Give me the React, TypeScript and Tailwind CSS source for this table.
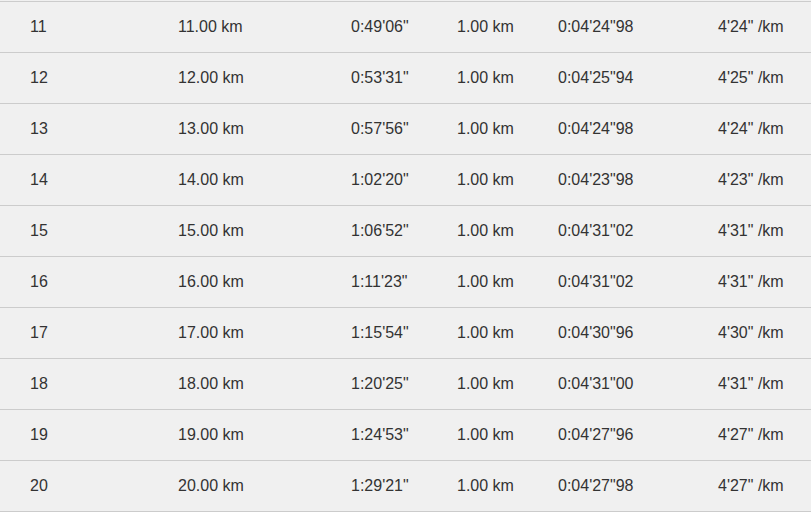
import React from "react";

const rows: [string, string, string, string, string, string][] = [
  ["11", "11.00 km", "0:49'06\"", "1.00 km", "0:04'24\"98", "4'24\" /km"],
  ["12", "12.00 km", "0:53'31\"", "1.00 km", "0:04'25\"94", "4'25\" /km"],
  ["13", "13.00 km", "0:57'56\"", "1.00 km", "0:04'24\"98", "4'24\" /km"],
  ["14", "14.00 km", "1:02'20\"", "1.00 km", "0:04'23\"98", "4'23\" /km"],
  ["15", "15.00 km", "1:06'52\"", "1.00 km", "0:04'31\"02", "4'31\" /km"],
  ["16", "16.00 km", "1:11'23\"", "1.00 km", "0:04'31\"02", "4'31\" /km"],
  ["17", "17.00 km", "1:15'54\"", "1.00 km", "0:04'30\"96", "4'30\" /km"],
  ["18", "18.00 km", "1:20'25\"", "1.00 km", "0:04'31\"00", "4'31\" /km"],
  ["19", "19.00 km", "1:24'53\"", "1.00 km", "0:04'27\"96", "4'27\" /km"],
  ["20", "20.00 km", "1:29'21\"", "1.00 km", "0:04'27\"98", "4'27\" /km"],
];

export default function App() {
  return (
    <div className="w-[811px] h-[513px] bg-white overflow-hidden" style={{ fontFamily: '"Liberation Sans", Arial, sans-serif' }}>
      <div className="bg-[#f0f0f0] pt-px text-[16px] text-[#333333]">
        {rows.map((r, i) => (
          <div
            key={i}
            className={`flex items-center border-t border-[#cccccc] pl-[30px] ${i === rows.length - 1 ? "h-[52px] border-b" : "h-[51px]"}`}
          >
            <div className="w-[148px]">{r[0]}</div>
            <div className="w-[173px]">{r[1]}</div>
            <div className="w-[106px]">{r[2]}</div>
            <div className="w-[101px]">{r[3]}</div>
            <div className="w-[160px]">{r[4]}</div>
            <div className="flex-1">{r[5]}</div>
          </div>
        ))}
      </div>
    </div>
  );
}
